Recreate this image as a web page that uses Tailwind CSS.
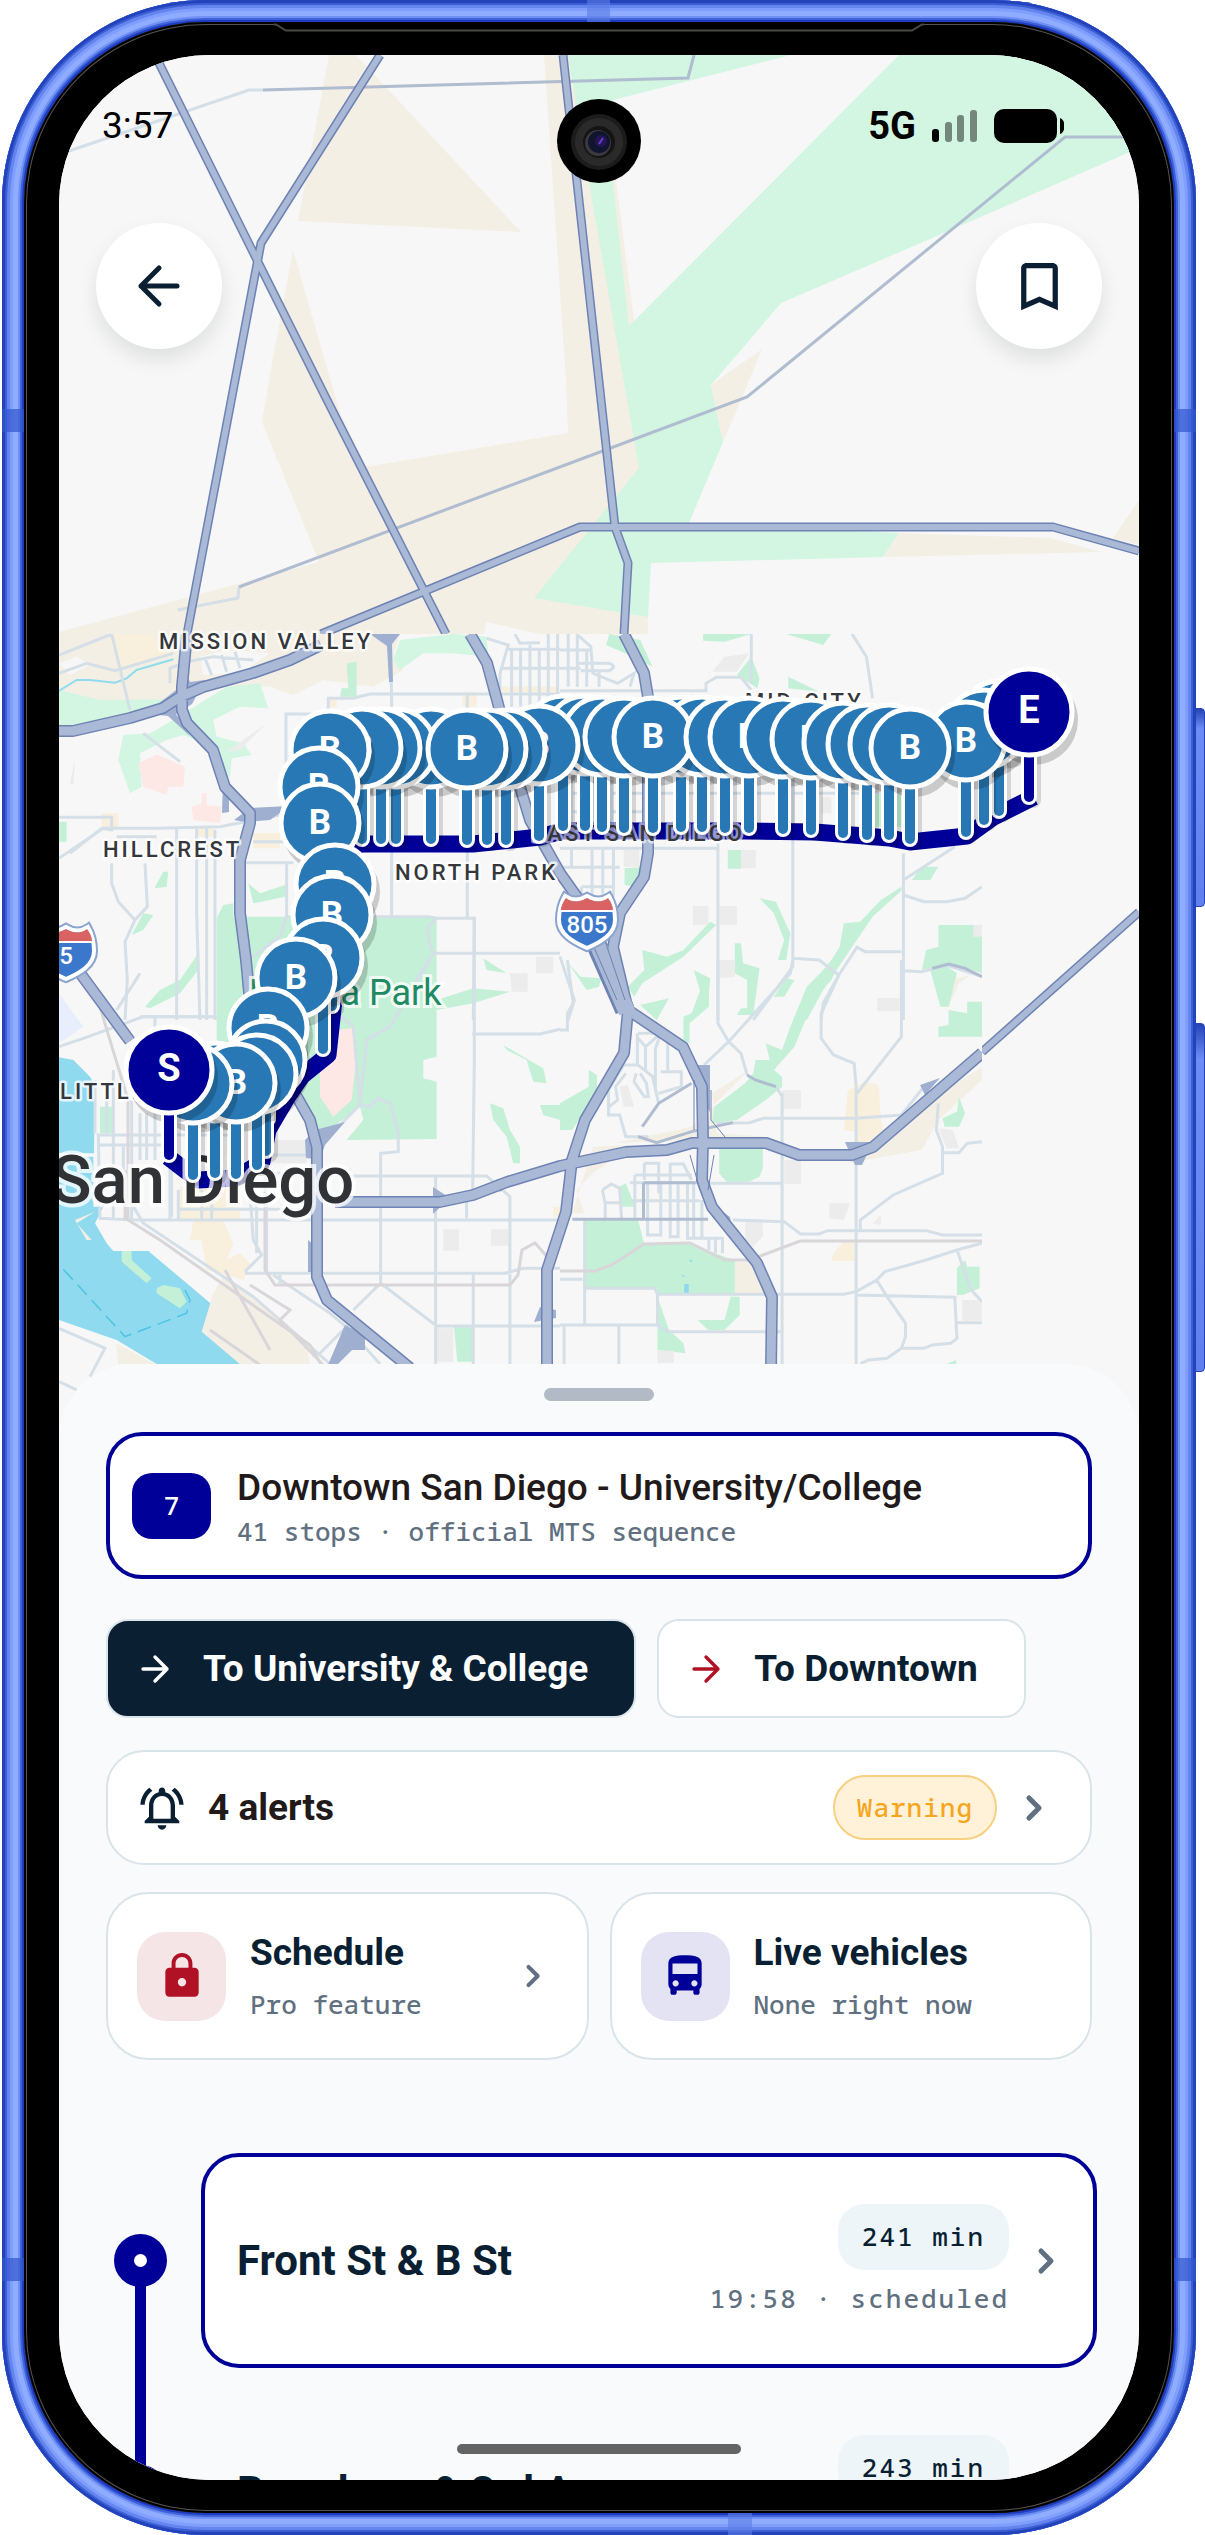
<!DOCTYPE html>
<html lang="en">
<head>
    <meta charset="UTF-8">
    <meta name="viewport" content="width=device-width, initial-scale=1.0">
    <title>Route 7 - Downtown San Diego</title>
    <script src="https://cdn.jsdelivr.net/npm/@tailwindcss/browser@4"></script>
    <style>
        .mono { font-family: 'Noto Sans Mono', 'DejaVu Sans Mono', monospace; font-weight: 500; }
        #map path, #map rect { vector-effect: non-scaling-stroke; }
        .street { fill: none; stroke: #d5dfe7; stroke-width: 3; }
        .lane { fill: none; stroke: #b0bcd0; stroke-width: 3; }
        .case { fill: none; stroke: #6e82b3; stroke-linejoin: round; }
        .road { fill: none; stroke: #a9b9d6; stroke-linejoin: round; }
        .place { fill: #34373b; font-size: 22px; font-weight: 500; letter-spacing: 3px; stroke: #fff; stroke-opacity: .75; stroke-width: 5; paint-order: stroke; stroke-linejoin: round; }
    </style>
</head>
<body class="bg-white h-screen overflow-hidden pr-[9px] font-['Roboto',sans-serif]">

<div class="relative h-full">
    <!-- Side buttons -->
    <div class="absolute -right-[9px] top-[708px] h-[199px] w-5 rounded border border-[#2743b8] bg-linear-to-b from-[#2743b8] via-[#6d8cf5] via-10% to-[#5f80ee]"></div>
    <div class="absolute -right-[9px] top-[1023px] h-[349px] w-5 rounded border border-[#2743b8] bg-linear-to-b from-[#2743b8] via-[#6d8cf5] via-10% to-[#5f80ee]"></div>

    <!-- Metal frame -->
    <div class="relative h-full ml-[2px] rounded-[203px] p-[22px] bg-[#1c3bc0] shadow-[inset_0_0_0_3px_#2343bb,inset_0_0_0_5px_#3c5ed4,inset_0_0_0_8px_#6485ee,inset_0_0_0_11px_#7f9efd,inset_0_0_0_16px_#8facff,inset_0_0_0_18px_#6f90f5,inset_0_0_0_20px_#3f62d8]">
        <div class="absolute top-0 left-[585px] w-[23px] h-[22px] bg-[#5b7de6]/60"></div>
        <div class="absolute bottom-0 left-[726px] w-[24px] h-[22px] bg-[#5b7de6]/60"></div>
        <div class="absolute left-0 top-[409px] w-[22px] h-[23px] bg-[#3257cf]/70"></div>
        <div class="absolute right-0 top-[409px] w-[22px] h-[23px] bg-[#3257cf]/70"></div>
        <div class="absolute left-0 top-[2258px] w-[22px] h-[23px] bg-[#3257cf]/70"></div>
        <div class="absolute right-0 top-[2258px] w-[22px] h-[23px] bg-[#3257cf]/70"></div>

        <!-- Bezel -->
        <div class="relative h-full rounded-[182px] bg-black px-[35px] py-[33px] shadow-[inset_0_0_0_2px_#000,inset_0_0_0_3px_#55534f]">
            <svg class="absolute top-0 left-1/2 -translate-x-1/2 w-[650px] h-3" viewBox="0 0 650 12" fill="none">
                <path d="M0 0H650V6H0Z" fill="#000"/>
                <path d="M0 2.500H2L12 8.500H638L648 2.500H650" stroke="#4a4845" stroke-width="2"/>
            </svg>

            <main class="relative h-full overflow-hidden rounded-[150px] bg-[#f8fafc]">

                <!-- Map -->
                <section class="relative">
                <svg id="map" class="block w-full bg-[#f7f7f7]" viewBox="59 55 1080 1383" font-family="Roboto, sans-serif" aria-label="Map of San Diego">
                    <g fill="#f4efe4">
                        <path d="M329 55H356L521 232L298 221Z"/>
                        <path d="M293 250L269 380L262 422L319 562L59 632V655H648V430L600 55H544L566 380L568 433L365 467L340 413Z"/>
                        <path d="M899 533L1051 538L1101 552L883 557ZM1113 538L1139 500V545Z"/>
                    </g>
                    <path fill="#d2f6e1" d="M568 55H791L613 100V183L629 326L899 55H1139V148L916 245L781 303L711 385L723 442L689 523L899 533L883 557L651 563L648 617L534 598L639 468L627 400L589 183Z"/>
                    <path fill="#f4efe4" d="M711 385L762 349L741 400L723 442Z"/>
                    <path fill="#f7f7f7" d="M486 622L540 634H484Z"/>
                    <path class="street" d="M69 151L249 90H263M239 587L238 598L178 610"/>
                    <path class="lane" d="M263 90L688 78L694 55M1139 137H1065L747 397L600 452L239 587"/>
                    <path class="case" stroke-width="9" d="M155 55L257 260L327 400L446 634M380 55L261 243L187 634M563 55L615 527L628 563L624 634M321 634L580 527H1053L1139 551M1139 912L982 1052" />
                    <path class="road" stroke-width="6" d="M155 55L257 260L327 400L446 634M380 55L261 243L187 634M563 55L615 527L628 563L624 634M321 634L580 527H1053L1139 551M1139 912L982 1052" />

                    <!-- Loaded high detail tiles -->
                    <clipPath id="tiles"><rect x="59" y="634" width="923" height="804"/></clipPath>
                    <g clip-path="url(#tiles)">
                        <rect x="59" y="634" width="923" height="804" fill="#f7f7f7"/>

                        <!-- parks, water, districts -->
                        <g transform="translate(40 620) scale(.3333)">
                            <path fill="#f4efe4" d="M57 42H1080L1060 100L1090 150L1000 200L920 190L850 180L760 225L690 200L500 200L420 240L57 260Z"/>
                            <path fill="#f8efdc" d="M215 42H330L400 100L240 150ZM865 230H890V262H865ZM1268 215H1310V260H1268ZM1380 200H1550V215H1380ZM185 580H235V625H185ZM470 625H525V650H470ZM640 640H720V685H640Z"/>
                            <path fill="#f7f7f7" d="M57 130L110 110L150 135L90 165ZM480 110L560 90L690 100L600 160L490 165Z"/>
                            <path fill="#d2f6e1" d="M57 210L180 240L420 238L270 290L57 325ZM480 250L560 200L660 190L685 265L600 260L520 300L530 350L610 370L635 405L575 415L570 470L540 480L490 370L430 345L380 360L300 400L305 500L270 520L235 420L250 345L330 340L400 300ZM1060 120L1080 60L1240 42L1340 50L1345 110L1240 100L1150 100L1080 150Z"/>
                            <path fill="#c3f0d6" d="M920 130L950 125V230H900L905 205H925ZM57 605H80V665H57ZM345 800L370 755L385 755L380 800L345 805ZM275 945L310 880L340 885L310 930ZM315 1160L360 1110L420 1080L475 1000V1050L420 1120L330 1165ZM625 790L660 820L735 795V830L640 850Z"/>
                            <path fill="#fde8e6" d="M295 430L350 403L435 440L430 500L385 500L380 525L310 500ZM455 560L485 550V520H500V555L545 560L540 610L460 600Z"/>
                            <path fill="#ececec" d="M1410 1060H1463V1115H1415ZM1488 1010H1540V1060H1488ZM105 415L90 490L100 495ZM680 310L560 395L600 390Z"/>
                            <path fill="none" stroke="#8fdcee" stroke-width="2" d="M57 213L110 180H150L225 188L260 175L290 150L400 118"/>
                        </g>
                        <g transform="translate(40 960) scale(.3333)">
                            <path fill="#c3f0d6" d="M530 -125L550 -165L580 -170V-130H1190V290L1150 300V355L1190 365V537L920 540L970 480L960 440L880 500L840 520L770 400L530 240ZM1190 120L1300 85L1410 95L1300 130L1190 150ZM1390 255L1450 290L1510 325L1520 370L1480 365L1460 300L1400 270ZM1350 430L1390 445L1410 510L1440 560V610H1420L1400 530L1360 480ZM1500 435H1560V480L1510 465ZM1330 -5L1400 40L1340 30ZM180 440H220V520H180ZM1242 1100H1298V1205H1252Z"/>
                            <path fill="#fde8e6" d="M880 210L940 205L950 290L935 420L880 470L840 410V300L880 260Z"/>
                            <path fill="#e8eefb" d="M57 100L130 200L57 250Z"/>
                            <path fill="#8fdaee" d="M57 292L100 300L150 350L165 375L162 580H57ZM57 590H160V740H190L165 790L200 850L220 873H325L565 1075L490 1115L600 1212H350L230 1140L57 1080Z"/>
                            <path fill="#f4efe4" d="M105 780L165 755L110 790L155 840L140 840ZM485 1115L520 1000L550 950L640 1010L800 1160L810 1212H600ZM228 1150L345 1212H235Z"/>
                            <path fill="#f8efdc" d="M420 680H600V780H550L580 850L560 900L600 880L630 910L610 960L580 950L500 930L485 840H450L460 780H420ZM1540 740H1560V770H1540Z"/>
                            <path fill="#c3f0d6" d="M245 873H275V900L335 955L320 970L245 905ZM350 985L370 975L420 985L440 1025L420 1045L350 1000Z"/>
                            <path fill="#ececec" d="M690 540H800V610H690ZM1210 808H1257V872H1210ZM1353 808H1405V857H1353ZM1190 1105H1240V1205H1190Z"/>
                            <path fill="none" stroke="#4fc3e3" stroke-width="1.500" stroke-dasharray="14 7" d="M70 928L255 1130L440 1060L450 1020L435 990"/>
                        </g>
                        <g transform="translate(560 620) scale(.4113 .3333)">
                            <path fill="#c3f0d6" d="M120 42L195 60L225 140L150 95L112 75ZM348 42H465L400 65L348 62ZM550 42H660L640 75ZM465 110L430 165L480 205L485 175ZM555 170L630 215L555 205ZM408 690H440V746H408ZM157 745L200 742L185 800L157 795ZM765 520H830V620H765ZM855 780L880 740H920L900 780ZM485 835L525 845L560 940L550 1020L530 1020L545 960L520 880ZM365 905L380 915L300 1010L200 1090L180 1130L165 1100L205 1050L200 990L260 1010L300 990ZM425 970H440L445 1030L485 1045L470 1185H430L440 1165H455V1080L425 1060ZM20 1030L50 1070L100 1075L95 1100L65 1110ZM325 1050L365 1075L360 1150L310 1200L345 1130ZM195 1155L265 1135L235 1200ZM520 1130L550 1075L570 1080L545 1130ZM570 1200L620 1100L680 980L690 910L730 905L780 840L830 800V812L760 890L700 1000L640 1110L600 1200ZM920 915H1026V1060L950 1030L880 1050L890 990L920 980Z"/>
                            <path fill="#ececec" d="M155 688H193V740H155ZM440 690H476V745H440ZM323 858H361V915H323ZM388 858H430V915H388ZM388 1020H425V1072H388ZM772 1135H825V1172H772ZM635 530H660V580H635ZM1005 915H1026V950H1005ZM400 110L460 100L430 155L370 155Z"/>
                        </g>
                        <g transform="translate(560 960) scale(.4113 .3333)">
                            <path fill="#f4efe4" d="M130 550L320 500L460 330L370 400L380 520L500 530ZM1026 320V360L920 480L880 570L700 610L760 560L900 420ZM80 560L180 555L80 640L40 690L60 760H30ZM425 905H480L500 1000H425ZM910 70L1000 45L970 70L945 140L925 140Z"/>
                            <path fill="#f8efdc" d="M700 390L740 365L775 375L780 480L790 540L720 550L720 515L690 510ZM690 845H716V902H660L665 880Z"/>
                            <path fill="#c3f0d6" d="M60 780H190L205 855L310 850L400 890L425 900V1000H235V985H57ZM387 565H493V625L485 650L460 665H405L387 640ZM375 440L450 370L470 340L475 300L510 300L500 250L540 270L560 200L600 80L640 30L660 0H680L660 60L620 110L590 200L570 260L520 330L540 350V380L500 420L430 480L370 490ZM900 30L930 10L965 40L945 140L925 140ZM990 125L1026 125V230H920V200L945 195V150L990 160ZM300 170L320 160L350 60L362 60V140L315 190V250L300 240ZM70 330L90 345V390L30 510H0V430L70 380ZM970 410L985 460L970 500H935L930 475L965 455ZM145 680L160 670L183 740H150ZM415 1010H437V1065L400 1110L360 1110L335 1080L400 1080ZM237 1010L265 1110L300 1150L305 1180L237 1170ZM965 1005V925L985 900L990 920H1020V985L980 1005ZM940 1212L963 1200V1212Z"/>
                            <path fill="#8fd8ee" d="M302 972H313V1000H302ZM314 897L323 903L318 907ZM294 942L305 950H298Z"/>
                            <path fill="#ececec" d="M540 390H586V446H540ZM545 600H586V672H545ZM388 5L425 15V50L388 55ZM772 115H825V152H772ZM145 380L165 375L180 440L155 440ZM920 505L955 510L970 565L940 565ZM655 730H705L690 780L655 775ZM450 785H493V830L470 860L450 840ZM237 1172H277V1208H237ZM978 1020H1026V1082H978ZM760 790L780 765V795Z"/>
                        </g>

                        <!-- streets -->
                        <g class="street">
                            <g transform="translate(40 620) scale(.3333)">
                                <path d="M57 105L215 42L270 270M57 160L140 130L225 152L400 100M390 190V145L440 125L520 110L640 120M495 115L515 165M545 105L560 155M585 95L600 145M57 592H215V630L185 625L90 700M865 280V235H940L990 222H1560M738 660V282H870M1050 100L1055 222V890M1282 225V890M57 715L190 625H350L540 620L720 585M230 650H350M410 620V1200M470 625V880L480 1200M500 625V1200M525 630V1200M215 730V790L235 845L285 900L322 860L315 730M285 900L255 965L262 1080L255 1200M640 665H740M610 728H760M740 730V890L720 950L640 1010M740 890H1165L1190 895H1303L1300 1200M1190 895L1165 920V960L1180 1000H1560M1180 1000L1130 1080L1110 1150M310 340L420 425M300 1190H530"/>
                                <path d="M1340 55L1405 75L1380 160V210M1405 88H1560M1385 145H1560M1415 88V260M1442 88V260M1470 75V260M1498 88V260M1525 42V260M1553 42V260M1425 42L1440 70L1500 68"/>
                            </g>
                            <g transform="translate(560 620) scale(.4113 .3333)">
                                <path d="M0 90H75M0 145H50M20 42V200M42 42V200M65 90V200M40 42L75 80L80 160L140 190L180 160L170 200M45 130H120Q140 140 120 152H50M95 152V200M0 212H355V190L380 172H440L465 210M465 42V190M710 42L745 110L760 235M0 520H830M384 670V1200M566 480V1040L470 1200M835 700V1200M0 685H384M0 742H145M0 575H200M28 685V742M52 800H130M52 800V830M78 685V830M104 685V830M130 685V830M835 780L960 680M835 825L885 845L940 845L985 835L1026 800M566 1015L630 1020L678 1065L640 1150L635 1200M678 1065L722 982L742 995H830M835 1052L880 1055L940 1035L1026 1070M0 1010L35 1140L20 1200M240 480V640M345 480V640M402 480V640M28 480V640M80 480V640M125 480V640"/>
                            </g>
                            <g transform="translate(40 960) scale(.3333)">
                                <path d="M170 525H600M180 555H380M180 780L175 530M165 360V520M57 260L130 235L310 170H530M220 330V780M275 420V780M230 150L300 40M300 460V600M320 460V600M345 170V600M390 600V780M415 690V780M200 400V520M600 640H820M700 585H800M180 775L280 780H1560M420 748H800M700 648H1340L1410 710V1212M800 650M1022 970V580L1075 575V520L1050 430L1015 415L990 440L960 435M960 435L980 240L1050 200L1170 0M960 430L940 200L880 150M960 435L900 495M1187 645V1212M1280 700V775M1300 1212V940M1190 1098H1560M615 935L665 885L640 840L630 700M615 940H1395L1450 925H1560M1022 970L1190 1098M1022 970L940 1050M1303 -130V310L1298 700M1297 222H1500L1560 208M650 700V880M680 730V940M700 945L870 1060L930 1110L1020 1212M720 945V970M930 1090L840 1180M57 1105L195 1165L150 1250M57 1265L110 1290M395 600V770M485 690V780M515 690V780M280 740L310 790L640 1010L870 1212M250 560V740"/>
                            </g>
                            <g transform="translate(560 960) scale(.4113 .3333)">
                                <path d="M18 0L32 130L18 160V210H0M384 0V190L410 245L440 280L455 345M566 0L560 40L410 245L350 315M678 45L635 160V235L665 285L715 310L720 380M722 400L830 230V0M720 380V1212M380 490L460 488L495 475H720L830 465L885 380M540 400V1212M525 380L540 410M920 430L915 510L930 560V640L810 705L730 780V810M930 578H970L990 550L1026 545M365 670H540M420 780L545 785L585 822H630L650 812H890L930 825H1026M0 1095H235L262 1115H540M10 1095V1212M143 1095V1212M57 985H230L237 1003H690L720 995L770 960L790 935L890 900L965 870L1026 850M720 1005L960 1012L965 1135L950 1150L905 1155L885 1165H830L795 1195L750 1200L730 1212M770 960L795 1010L840 1090V1130L830 1165M965 1088H1026M965 870L1000 990L1026 1025M60 780V1095M237 1003V1095M0 958H55M190 220H240M188 220V315M190 235L208 260L245 220M208 260V330M245 222L232 265V390L240 430M262 230V335M245 335H295V380L240 400M155 315L118 390V465H145L160 530H215M155 315H190L225 350L240 430M185 340L180 365L205 410H215L210 370L195 340M160 340L135 380L140 420L120 440M205 610H240V700M205 610V660M182 645V780M268 610V830H287V670M268 612H300L320 660M182 645H320M170 668H340M213 670V825H245V670M310 670V835H395V880M325 670V835M345 720V835M362 835V870M378 835V880M175 722H340M103 690L125 672L145 685L150 780M103 690L110 730V780M110 728H148"/>
                                <path class="lane" d="M455 345L475 360L525 380M320 370L240 430L200 500M905 25L945 12L985 25L1026 50M30 778H360M203 668H330M203 668V778M190 530L235 548L320 515L420 488"/>
                            </g>
                        </g>
                        <g fill="none" stroke="#d9d6da" stroke-width="3">
                            <path d="M100 1007L128 1100V1220L160 1240L310 1345L330 1380M125 1170V1220M265 1170V1270L275 1285H510L518 1275L522 1250L535 1243L550 1260M250 1285L290 1310L280 1320L330 1372M225 1270L270 1350M210 1330L260 1365"/>
                            <path d="M560 1271H595L612 1265L644 1244L690 1243L725 1260L750 1260L800 1241H982"/>
                        </g>

                        <!-- freeway ramps -->
                        <g fill="#9fafcf">
                            <path d="M158 704L176 690L182 665L190 682L205 680L192 704L176 714L190 736L168 716L150 714Z"/>
                            <path d="M370 634H400L392 644L393 682H389L387 646ZM223 780L229 790V812L222 813ZM234 820L250 808L290 806L270 820L245 822ZM305 1140L315 1130L345 1122L325 1145L320 1160L306 1158ZM308 1240L320 1250V1272H308ZM495 1180L520 1174L500 1192ZM433 1187L450 1198L433 1214ZM345 1325L365 1335V1350H352L330 1372L325 1372ZM534 1322L540 1307L556 1310V1318ZM698 1065L710 1065V1112L702 1100ZM718 1208L730 1217L733 1235L714 1215ZM845 1142H873L862 1165H855ZM920 1085L940 1078L925 1095Z"/>
                        </g>
                        <g class="case" stroke-width="12">
                            <path d="M59 731H73L130 718L163 708L180 697L203 687L253 673L290 660L321 645M187 634L182 687V710L187 723L213 750L225 787L250 813V823L240 860V913L246 960L250 1003L273 1060L297 1097L310 1120L317 1147V1277L327 1300L410 1368M470 634L487 663L497 700L520 787L530 820L560 873L577 897L600 942L628 1010M624 634L644 673L648 697V853L644 877L620 913L613 947L628 1010L624 1053L585 1120L572 1160L566 1212L547 1270V1368M628 1010L683 1047L702 1087L703 1140L702 1180L712 1207L757 1263L772 1297L771 1368M335 1202H440L473 1195L507 1182L560 1166L626 1152L667 1150L692 1143H766L799 1155H852L873 1147L982 1053M80 973L130 1041"/>
                        </g>
                        <path class="case" stroke-width="20" d="M595 942L625 1010"/>
                        <g class="road" stroke-width="9">
                            <path d="M59 731H73L130 718L163 708L180 697L203 687L253 673L290 660L321 645M187 634L182 687V710L187 723L213 750L225 787L250 813V823L240 860V913L246 960L250 1003L273 1060L297 1097L310 1120L317 1147V1277L327 1300L410 1368M470 634L487 663L497 700L520 787L530 820L560 873L577 897L600 942L628 1010M624 634L644 673L648 697V853L644 877L620 913L613 947L628 1010L624 1053L585 1120L572 1160L566 1212L547 1270V1368M628 1010L683 1047L702 1087L703 1140L702 1180L712 1207L757 1263L772 1297L771 1368M335 1202H440L473 1195L507 1182L560 1166L626 1152L667 1150L692 1143H766L799 1155H852L873 1147L982 1053M80 973L130 1041"/>
                        </g>
                        <path class="road" stroke-width="17" d="M595 938L627 1012"/>
                        <path class="case" stroke-width="1" d="M593 945L617 1000M603 935L625 1000M694 1080V1130M711 1090V1120L725 1137M690 1155L700 1190M708 1190L714 1155"/>
                    </g>

                    <!-- Route line -->
                    <path fill="none" stroke="#000099" stroke-width="17" stroke-linejoin="round" d="M168 1157L198 1180L236 1178L262 1162L268 1130L288 1096L302 1076L328 1055L334 1000L345 920L350 848L362 844H473L540 837L562 831H745L815 832L889 838L910 842L967 836L992 818L1034 797"/>

                    <text class="place" x="159" y="649">MISSION VALLEY</text>
                    <text class="place" x="103" y="857">HILLCREST</text>
                    <text class="place" x="395" y="880">NORTH PARK</text>
                    <text class="place" x="745" y="709">MID-CITY</text>
                    <text class="place" x="532" y="841" style="stroke-opacity:.6">EAST SAN DIEGO</text>
                    <text class="place" x="60" y="1099">LITTLE ITALY</text>
                    <text x="249" y="1005" font-size="36" fill="#1f8a63" stroke="#fff" stroke-opacity=".75" stroke-width="6" paint-order="stroke">Balboa Park</text>
                    <text x="51" y="1203" font-size="67" font-weight="500" fill="#303236" stroke="#fff" stroke-opacity=".75" stroke-width="8" paint-order="stroke">San Diego</text>

                    <symbol id="shield" viewBox="-34 -32 68 66" overflow="visible">
                        <path d="M0-24C-8-19-16-20-22-24C-26-17-28-10-28 0C-28 14-14 22 0 28C14 22 28 14 28 0C28-10 26-17 22-24C16-20 8-19 0-24Z" fill="#3b78cb" stroke="#8ba3cf" stroke-width="8"/>
                        <path d="M0-24C-8-19-16-20-22-24C-26-17-28-10-28 0C-28 14-14 22 0 28C14 22 28 14 28 0C28-10 26-17 22-24C16-20 8-19 0-24Z" fill="#3b78cb" stroke="#fff" stroke-width="4"/>
                        <path d="M0-22C-8-17-16-18-21-22C-24-18-26-14-26-10H26C26-14 24-18 21-22C16-18 8-17 0-22Z" fill="#d96262"/>
                        <path d="M-27-9H27" stroke="#fff" stroke-width="2"/>
                    </symbol>
                    <use href="#shield" x="553" y="888" width="68" height="66"/>
                    <text x="587" y="933" font-size="24" font-weight="500" fill="#fff" text-anchor="middle">805</text>
                    <use href="#shield" x="32" y="919" width="68" height="66"/>
                    <text x="66" y="964" font-size="24" font-weight="500" fill="#fff" text-anchor="middle">5</text>

                    <!-- Stop pins are appended here -->
                    <g id="pins"></g>
                </svg>

                <!-- Status bar -->
                <div class="absolute inset-x-0 top-0 flex items-center justify-between pt-[50px] pl-[43px] pr-[75px] text-black">
                    <span class="text-[37px] leading-[42px]">3:57</span>
                    <div class="flex items-center gap-4">
                        <span class="text-[38px] leading-[42px] font-bold">5G</span>
                        <svg class="w-[46px] h-[32px]" viewBox="0 0 46 32">
                            <rect x="0" y="19" width="7" height="13" rx="3"/>
                            <g fill-opacity=".45"><rect x="13" y="12" width="7" height="20" rx="3"/><rect x="25" y="5" width="7" height="27" rx="3"/><rect x="38" y="0" width="7" height="32" rx="3"/></g>
                        </svg>
                        <svg class="w-[70px] h-[34px]" viewBox="0 0 70 34">
                            <rect width="63" height="34" rx="10"/><path d="M66 9C72 11 72 23 66 25Z"/>
                        </svg>
                    </div>
                </div>

                <!-- Front camera -->
                <svg class="absolute top-[44px] left-1/2 -translate-x-1/2 w-[84px] h-[84px]" viewBox="0 0 84 84">
                    <circle cx="42" cy="42" r="42"/><circle cx="42" cy="43" r="28" fill="#1c1c1c"/><circle cx="42" cy="43" r="24" fill="#2a2a2a"/>
                    <circle cx="42" cy="43" r="16" fill="#141414"/><circle cx="41" cy="44" r="13" fill="#3a3a3e"/><circle cx="42" cy="43" r="11" fill="#10142e"/>
                    <circle cx="44" cy="42" r="6" fill="#241650"/><path d="M42 45L46 39" stroke="#6d3ad8" stroke-width="2"/>
                </svg>

                <div class="absolute inset-x-0 top-[168px] flex justify-between px-[37px]">
                    <button aria-label="Back" class="grid place-items-center size-[126px] rounded-full bg-white shadow-[0_10px_20px_rgba(0,20,20,0.10)]">
                        <svg class="size-[44px]" viewBox="0 0 44 44" fill="none" stroke="#0b1f33" stroke-width="5" stroke-linecap="round" stroke-linejoin="round"><path d="M40 22H4M22 4L4 22L22 40"/></svg>
                    </button>
                    <button aria-label="Save route" class="grid place-items-center size-[126px] rounded-full bg-white shadow-[0_10px_20px_rgba(0,20,20,0.10)]">
                        <svg class="size-[63px]" viewBox="0 0 24 24" fill="#0b1f33"><path d="M17 3H7c-1.100 0-2 .9-2 2v16l7-3 7 3V5c0-1.100-.9-2-2-2zm0 15l-5-2.180L7 18V5h10v13z"/></svg>
                    </button>
                </div>
                </section>

                <!-- Bottom sheet -->
                <section class="relative -mt-[74px] rounded-t-[74px] bg-[#f8fafc] pt-6">
                    <div class="mx-auto w-[110px] h-[13px] rounded-full bg-[#b2bbc5]"></div>

                    <div class="px-[47px] pt-[31px]">
                        <div class="flex items-center gap-[26px] h-[147px] rounded-[36px] border-4 border-[#000099] bg-white px-[22px]">
                            <span class="mono grid place-items-center w-[79px] h-[66px] rounded-[20px] bg-[#000099] text-white text-[26px]">7</span>
                            <div class="pt-1">
                                <h1 class="text-[37px] leading-[46px] font-medium text-[#221a1a]">Downtown San Diego - University/College</h1>
                                <p class="mono text-[26px] leading-[40px] text-[#607080] whitespace-pre">41 stops · official MTS sequence</p>
                            </div>
                        </div>

                        <div class="mt-10 flex gap-[21px]">
                            <button class="flex items-center gap-6 h-[99px] rounded-[22px] border-2 border-[#d9e4ea] bg-[#0b1f33] pl-[23px] pr-[46px] text-[37px] font-bold text-white">
                                <svg class="size-[48px]" viewBox="0 0 24 24" fill="none" stroke="currentColor" stroke-width="1.700" stroke-linecap="round" stroke-linejoin="round"><path d="M6 12h12M12 6l6 6-6 6"/></svg>
                                To University &amp; College
                            </button>
                            <button class="flex items-center gap-6 h-[99px] rounded-[22px] border-2 border-[#d9e4ea] bg-white pl-[23px] pr-[46px] text-[37px] font-bold text-[#0b1f33]">
                                <svg class="size-[48px] text-[#b01124]" viewBox="0 0 24 24" fill="none" stroke="currentColor" stroke-width="1.700" stroke-linecap="round" stroke-linejoin="round"><path d="M6 12h12M12 6l6 6-6 6"/></svg>
                                To Downtown
                            </button>
                        </div>

                        <button class="mt-8 flex w-full items-center h-[115px] rounded-[38px] border-2 border-[#d9e4ea] bg-white pl-7 pr-[33px]">
                            <svg class="size-[52px]" viewBox="0 0 24 24" fill="#0b1f33"><path d="M12 22c1.100 0 2-.9 2-2h-4c0 1.100.9 2 2 2zm6-6v-5c0-3.070-1.630-5.640-4.500-6.320V4c0-.83-.67-1.500-1.500-1.500s-1.500.67-1.500 1.500v.68C7.640 5.360 6 7.920 6 11v5l-2 2v1h16v-1l-2-2zm-2 1H8v-6c0-2.480 1.510-4.500 4-4.500s4 2.020 4 4.500v6zM7.580 4.080L6.150 2.650C3.750 4.480 2.170 7.300 2.030 10.500h2c.15-2.650 1.510-4.970 3.550-6.420zm12.390 6.420h2c-.15-3.200-1.730-6.020-4.120-7.850l-1.420 1.430c2.020 1.450 3.390 3.770 3.540 6.420z"/></svg>
                            <span class="ml-5 text-[37px] font-bold text-[#221a1a]">4 alerts</span>
                            <span class="mono ml-auto rounded-full border-2 border-[#f7d081] bg-[#fff2d9] px-[22px] h-[65px] leading-[60px] text-[26px] tracking-[1px] text-[#f5a61d]">Warning</span>
                            <svg class="ml-3 size-[48px]" viewBox="0 0 24 24" fill="none" stroke="#607080" stroke-width="2.600" stroke-linecap="round" stroke-linejoin="round"><path d="M10 7l5 5-5 5"/></svg>
                        </button>

                        <div class="mt-[27px] grid grid-cols-2 gap-[21px]">
                            <button class="flex items-center h-[168px] rounded-[42px] border-2 border-[#d9e4ea] bg-white pl-[29px] pr-[31px] text-left">
                                <span class="grid place-items-center size-[89px] rounded-[28px] bg-[#f5e5e7]">
                                    <svg class="size-[50px]" viewBox="0 0 24 24" fill="#b01124"><path d="M18 8h-1V6c0-2.760-2.240-5-5-5S7 3.240 7 6v2H6c-1.100 0-2 .9-2 2v10c0 1.100.9 2 2 2h12c1.100 0 2-.9 2-2V10c0-1.100-.9-2-2-2zm-6 9c-1.100 0-2-.9-2-2s.9-2 2-2 2 .9 2 2-.9 2-2 2zm3.100-9H8.900V6c0-1.710 1.390-3.100 3.100-3.100s3.100 1.390 3.100 3.100v2z"/></svg>
                                </span>
                                <span class="ml-6 flex-1 pt-1">
                                    <span class="block text-[37px] leading-[52px] font-bold text-[#0b1f33]">Schedule</span>
                                    <span class="mono block text-[26px] leading-[50px] text-[#607080]">Pro feature</span>
                                </span>
                                <svg class="size-[44px]" viewBox="0 0 24 24" fill="none" stroke="#607080" stroke-width="2.200" stroke-linecap="round" stroke-linejoin="round"><path d="M9 7l5 5-5 5"/></svg>
                            </button>
                            <button class="flex items-center h-[168px] rounded-[42px] border-2 border-[#d9e4ea] bg-white pl-[29px] pr-[31px] text-left">
                                <span class="grid place-items-center size-[89px] rounded-[28px] bg-[#e4e3f3]">
                                    <svg class="size-[50px]" viewBox="0 0 24 24" fill="#000099"><path d="M4 16c0 .88.390 1.670 1 2.220V20c0 .55.450 1 1 1h1c.55 0 1-.45 1-1v-1h8v1c0 .55.450 1 1 1h1c.55 0 1-.45 1-1v-1.780c.61-.55 1-1.340 1-2.220V6c0-3.500-3.580-4-8-4s-8 .5-8 4v10zm3.500 1c-.83 0-1.500-.67-1.500-1.500S6.670 14 7.500 14s1.500.67 1.500 1.500S8.330 17 7.500 17zm9 0c-.83 0-1.500-.67-1.500-1.500s.67-1.500 1.500-1.500 1.500.67 1.500 1.500-.67 1.500-1.500 1.500zm1.500-6H6V6h12v5z"/></svg>
                                </span>
                                <span class="ml-6 flex-1 pt-1">
                                    <span class="block text-[37px] leading-[52px] font-bold text-[#0b1f33]">Live vehicles</span>
                                    <span class="mono block text-[26px] leading-[50px] text-[#607080]">None right now</span>
                                </span>
                            </button>
                        </div>
                    </div>

                    <!-- Stops timeline -->
                    <ol class="mt-[93px] pl-[55px] pr-[42px]">
                        <li class="relative flex items-center gap-[34px] pb-4">
                            <div class="absolute left-[21px] top-[108px] -bottom-4 w-[11px] bg-[#000099]"></div>
                            <div class="relative grid place-items-center size-[53px] rounded-full bg-[#000099]"><span class="size-[13px] rounded-full bg-white"></span></div>
                            <a href="#front-st" class="flex flex-1 items-center h-[215px] rounded-[38px] border-4 border-[#000099] bg-white pl-8 pr-6">
                                <span class="flex-1 text-[42px] font-bold text-[#0b1f33]">Front St &amp; B St</span>
                                <span class="mono flex flex-col items-end text-[26px] tracking-[2px]">
                                    <span class="h-[66px] rounded-[26px] bg-[#edf5f9] px-6 leading-[64px] text-[#0b1f33]">241 min</span>
                                    <span class="mt-2 leading-[40px] text-[#607080]">19:58 · scheduled</span>
                                </span>
                                <svg class="ml-3 size-[48px]" viewBox="0 0 24 24" fill="none" stroke="#607080" stroke-width="2.500" stroke-linecap="round" stroke-linejoin="round"><path d="M10 7l5 5-5 5"/></svg>
                            </a>
                        </li>
                        <li class="relative flex items-center gap-[34px]">
                            <div class="absolute left-[21px] top-0 bottom-0 w-[11px] bg-[#000099]"></div>
                            <div class="relative grid place-items-center size-[53px] rounded-full bg-[#000099]"><span class="size-[13px] rounded-full bg-white"></span></div>
                            <a href="#broadway" class="flex flex-1 items-center h-[215px] pl-9 pr-7">
                                <span class="flex-1 text-[42px] font-bold text-[#0b1f33]">Broadway &amp; 3rd Av</span>
                                <span class="mono flex flex-col items-end text-[26px] tracking-[2px]">
                                    <span class="h-[66px] rounded-[26px] bg-[#edf5f9] px-6 leading-[64px] text-[#0b1f33]">243 min</span>
                                    <span class="mt-2 leading-[40px] text-[#607080]">20:00 · scheduled</span>
                                </span>
                                <svg class="ml-3 size-[48px]" viewBox="0 0 24 24" fill="none" stroke="#607080" stroke-width="2.500" stroke-linecap="round" stroke-linejoin="round"><path d="M10 7l5 5-5 5"/></svg>
                            </a>
                        </li>
                    </ol>
                </section>

                <!-- Gesture bar -->
                <div class="absolute bottom-[26px] left-1/2 -translate-x-1/2 w-[284px] h-[10px] rounded-full bg-[#636463]"></div>
            </main>
        </div>
    </div>
</div>

<script>
    // Pin heads in paint order, stops further south come last
    const stops = [
        [999, 720], [984, 729], [563, 735], [585, 735], [602, 736], [681, 736], [702, 736], [624, 737], [653, 737],
        [725, 737], [749, 737], [783, 738], [811, 739], [966, 741], [843, 742], [867, 744], [889, 744], [539, 745],
        [910, 748], [431, 748], [396, 748], [381, 748], [362, 748], [506, 749], [487, 749], [467, 749], [330, 750],
        [319, 787], [320, 823], [335, 884], [332, 915], [323, 958], [296, 978], [268, 1028], [266, 1060], [257, 1074],
        [215, 1082], [236, 1083], [193, 1084]
    ];

    function pin(x, y, r, tip, color, label, size) {
        return `<g transform="translate(${x} ${y})">
            <circle cx="4" cy="8" r="${r}" fill="#000" fill-opacity=".18"/>
            <path d="M4 ${r}V${tip - 5}" stroke="#000" stroke-opacity=".14" stroke-width="16" stroke-linecap="round"/>
            <path d="M0 0V${tip - 8}" stroke="#fff" stroke-width="16" stroke-linecap="round"/>
            <path d="M0 0V${tip - 8}" stroke="${color}" stroke-width="10" stroke-linecap="round"/>
            <circle r="${r - 2}" fill="${color}" stroke="#fff" stroke-width="5"/>
            <text y="${Math.round(size * 0.3)}" font-size="${size}" font-weight="700" fill="#fff" text-anchor="middle">${label}</text>
        </g>`;
    }

    document.getElementById('pins').innerHTML =
        stops.map(([x, y]) => pin(x, y, 41, 99, '#2878b5', 'B', 35)).join('') +
        pin(169, 1070, 45, 93, '#000099', 'S', 38) +
        pin(1029, 712, 45, 93, '#000099', 'E', 38);
</script>
</body>
</html>
